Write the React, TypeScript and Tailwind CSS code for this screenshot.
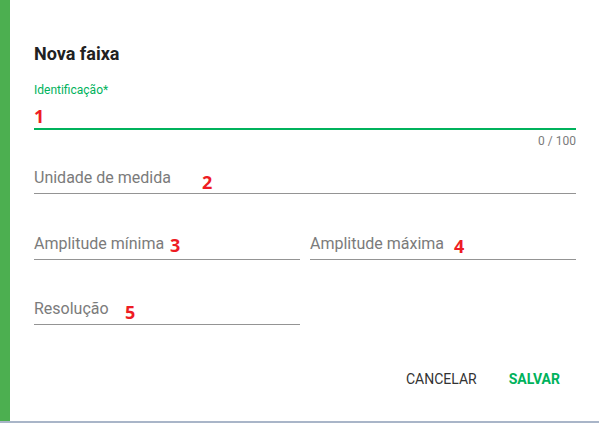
import React from 'react';

const Mark = ({ n, className }: { n: string; className: string }) => (
  <span
    className={`absolute text-[18px] leading-[24px] font-bold text-[#ee1c24] ${className}`}
    style={{ fontFamily: '"Open Sans", sans-serif' }}
  >
    {n}
  </span>
);

const Field = ({ label, mark, markClass, top }: { label: string; mark: string; markClass: string; top: string }) => (
  <div className={`relative ${top}`}>
    <div className="h-[24px] text-[16px] leading-[24px] text-[#7b7b7b]">{label}</div>
    <div className="mt-[3px] border-b border-[#949494]" />
    <Mark n={mark} className={markClass} />
  </div>
);

const App = () => {
  return (
    <div className="w-[599px] h-[423px] flex flex-col bg-white" style={{ fontFamily: 'Roboto, "Liberation Sans", sans-serif' }}>
      <div className="flex h-[421px]">
        <div className="w-[10px] bg-[#4caf50]" />
        <div className="flex-1 pl-[24px] pr-[23px] pt-[42px]">
          {/* Title */}
          <h2 className="text-[18px] leading-[24px] font-bold text-[#212121]">Nova faixa</h2>

          {/* Identificação */}
          <div className="relative mt-[16px]">
            <div className="text-[12px] leading-[16px] text-[#00b25c]">Identificação*</div>
            <div className="h-[30px]" />
            <div className="h-[2px] bg-[#00b25c]" />
            <Mark n="1" className="left-0 top-[22px]" />
          </div>
          <div className="mt-[3px] text-right text-[12px] leading-[16px] text-[#7b7b7b]">0 / 100</div>

          <Field label="Unidade de medida" mark="2" markClass="left-[168px] top-[4px]" top="mt-[17px]" />

          <div className="grid grid-cols-2 gap-[10px]">
            <Field label="Amplitude mínima" mark="3" markClass="left-[136px] top-[1px]" top="mt-[38px]" />
            <Field label="Amplitude máxima" mark="4" markClass="left-[144px] top-[2px]" top="mt-[38px]" />
          </div>

          <div className="grid grid-cols-2 gap-[10px]">
            <Field label="Resolução" mark="5" markClass="left-[91px] top-[3px]" top="mt-[37px]" />
          </div>

          {/* Actions */}
          <div className="mt-[36px] flex justify-end">
            <button className="h-9 px-4 text-[14px] font-normal text-[#333333]">CANCELAR</button>
            <button className="h-9 px-4 text-[14px] font-bold text-[#00b25c]">SALVAR</button>
          </div>
        </div>
      </div>
      <div className="h-[2px] bg-[#a9b5c8]" />
    </div>
  );
};

export default App;
